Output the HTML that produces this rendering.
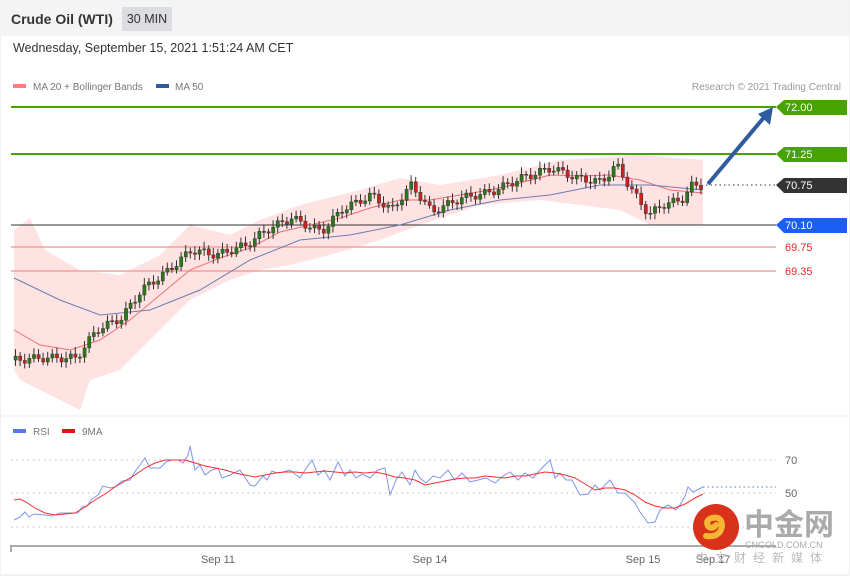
<!DOCTYPE html>
<html><head><meta charset="utf-8"><style>
body{margin:0;background:#f2f2f2;width:850px;height:576px;overflow:hidden;font-family:"Liberation Sans",sans-serif}
.card{position:absolute;left:1px;top:1px;width:848px;height:573px;background:#fff}
.hdr{position:absolute;left:0;top:0;width:848px;height:35px;background:#f4f4f4}
.t{position:absolute;left:10px;top:10px;font-weight:bold;font-size:14px;color:#333}
.tf{position:absolute;left:121px;top:6px;width:50px;height:24px;background:#dcdde0;font-size:12.5px;color:#333;line-height:24px;text-align:center}
.dt{position:absolute;left:12px;top:40px;font-size:12.5px;color:#333}
svg{position:absolute;left:0;top:0}
</style></head><body>
<div class="card">
<div class="hdr"><div class="t">Crude Oil (WTI)</div><div class="tf">30 MIN</div></div>
<div class="dt">Wednesday, September 15, 2021 1:51:24 AM CET</div>
</div>
<svg width="850" height="576" font-family="Liberation Sans, sans-serif">
<rect x="13" y="84" width="13" height="4" fill="#ff7f7f"/><text x="33" y="90" font-size="10" fill="#777">MA 20 + Bollinger Bands</text>
<rect x="156" y="84" width="13" height="4" fill="#2f5c9c"/><text x="175" y="90" font-size="10" fill="#777">MA 50</text>
<text x="841" y="90" font-size="10" fill="#999" text-anchor="end">Research © 2021 Trading Central</text>
<polygon fill="#ffe3e3" points="14,230 30,218 45,250 80,270 120,275 160,255 190,225 230,235 260,220 300,205 360,190 400,178 440,185 500,175 560,160 640,155 703,160 703,225 650,225 620,210 580,205 540,200 480,205 420,225 380,240 330,255 290,265 260,270 230,280 190,300 150,340 120,370 90,380 80,410 50,395 20,380 14,370"/>
<line x1="11" y1="107" x2="776" y2="107" stroke="#48a200" stroke-width="2"/>
<line x1="11" y1="154" x2="776" y2="154" stroke="#48a200" stroke-width="2"/>
<line x1="11" y1="225" x2="776" y2="225" stroke="#333" stroke-width="1"/>
<line x1="11" y1="247" x2="776" y2="247" stroke="#f4a0a0" stroke-width="1.5"/>
<line x1="11" y1="271" x2="776" y2="271" stroke="#f4a0a0" stroke-width="1.5"/>
<line x1="706" y1="185" x2="776" y2="185" stroke="#333" stroke-dasharray="1.5,3"/>
<polyline fill="none" stroke="#f07070" stroke-width="1" points="14,330 40,345 70,350 100,340 130,320 160,295 190,270 220,258 250,248 280,232 310,225 340,218 370,208 400,200 430,200 460,195 490,190 520,183 550,175 580,176 610,175 640,180 670,190 703,193"/>
<polyline fill="none" stroke="#6a7fb0" stroke-width="1" points="14,278 60,300 100,315 150,310 200,290 250,260 300,240 350,235 400,225 450,210 500,200 550,195 600,185 650,185 703,190"/>
<g id="c"></g>
<line x1="708" y1="184" x2="766" y2="115" stroke="#2f5c9c" stroke-width="4"/>
<polygon points="773,107 758,114 770,125" fill="#2f5c9c"/>
<g font-size="11" fill="#fff">
<polygon points="776,107 784,100 847,100 847,115 784,115" fill="#48a200"/><text x="785" y="111">72.00</text>
<polygon points="776,154 784,147 847,147 847,162 784,162" fill="#48a200"/><text x="785" y="158">71.25</text>
<polygon points="776,185 784,178 847,178 847,193 784,193" fill="#333"/><text x="785" y="189">70.75</text>
<polygon points="776,225 784,218 847,218 847,233 784,233" fill="#1a5ef5"/><text x="785" y="229">70.10</text>
<text x="785" y="251" fill="#e8262a">69.75</text><text x="785" y="275" fill="#e8262a">69.35</text>
</g>
<line x1="1" y1="416" x2="849" y2="416" stroke="#eee"/>
<rect x="13" y="429" width="13" height="4" fill="#5a78e0"/><text x="33" y="435" font-size="10" fill="#777">RSI</text>
<rect x="62" y="429" width="13" height="4" fill="#e81010"/><text x="82" y="435" font-size="10" fill="#777">9MA</text>
<g stroke="#bbb" stroke-dasharray="1.5,4"><line x1="11" y1="460" x2="776" y2="460"/><line x1="11" y1="493" x2="776" y2="493"/><line x1="11" y1="527" x2="776" y2="527"/></g>
<line x1="703" y1="487" x2="776" y2="487" stroke="#5a78e0" stroke-dasharray="1.5,3"/>
<g font-size="11" fill="#666"><text x="785" y="464">70</text><text x="785" y="497">50</text></g>
<polyline fill="none" stroke="#7f95ea" stroke-width="1" points="14,520 20,517 25,512 29,517 34,514 45,515 52,516 60,513 72,513 78,513 82,507 87,506 92,499 98,495 103,486 110,488 115,487 122,481 130,480 136,470 140,465 145,458 150,468 160,468 166,462 172,460 178,460 183,463 188,455 190,446 195,470 200,465 205,475 212,470 218,468 222,478 230,475 240,470 250,485 255,486 263,476 267,480 272,471 277,473 283,472 290,470 300,478 305,470 312,460 318,475 324,470 330,480 338,462 345,476 350,470 356,478 362,474 370,478 378,470 385,468 390,495 396,480 402,472 410,485 415,470 420,478 426,483 433,476 440,478 448,470 455,480 462,473 470,482 478,480 486,478 495,483 503,476 510,472 518,480 525,473 533,478 540,470 548,462 550,460 555,478 560,473 566,480 572,480 580,495 588,494 595,485 600,490 610,480 618,493 625,493 635,503 640,512 648,523 655,522 660,510 668,505 676,510 680,505 685,496 688,487 693,492 703,487"/>
<polyline fill="none" stroke="#f03030" stroke-width="1" points="14,500 20,499 26,502 35,508 45,513 55,515 65,514 75,513 85,507 95,500 105,494 115,487 125,481 135,475 145,468 155,463 165,460 175,460 185,460 195,463 205,466 215,468 225,470 235,473 245,475 255,477 265,475 275,473 285,472 295,472 305,473 315,472 325,471 335,472 345,473 355,472 365,473 375,472 385,474 395,477 405,478 415,480 425,485 435,483 445,481 455,479 465,478 475,478 485,476 495,477 505,478 515,476 525,476 535,474 545,472 555,473 565,475 575,478 585,484 595,490 605,488 615,488 625,490 635,495 645,502 655,506 665,508 675,508 685,504 695,498 703,494"/>
<line x1="11" y1="546" x2="776" y2="546" stroke="#aaa" stroke-width="2"/><line x1="11" y1="545" x2="11" y2="552" stroke="#aaa" stroke-width="2"/>
<g font-size="11" fill="#666" text-anchor="middle"><text x="218" y="563">Sep 11</text><text x="430" y="563">Sep 14</text><text x="643" y="563">Sep 15</text><text x="713" y="563">Sep 17</text></g>
<circle cx="716" cy="527" r="23" fill="#d8321a"/>
<path d="M706 536 q14 2 16 -10 q0 -10 -10 -8 q-7 2 -4 8 q4 4 8 -1" fill="none" stroke="#f7b733" stroke-width="6" stroke-linecap="round"/>
<text x="744" y="535" font-size="30" font-weight="bold" fill="#aaa" font-family="Noto Sans CJK SC, sans-serif">中金网</text>
<text x="745" y="548" font-size="9" fill="#aaa">CNGOLD.COM.CN</text>
<text x="696" y="562" font-size="12" fill="#bbb" letter-spacing="7" font-family="Noto Sans CJK SC, sans-serif">中文财经新媒体</text>
</svg>
<script>
var k=[[14,360],[40,358],[75,358],[95,330],[120,318],[140,290],[165,272],[190,250],[215,255],[245,245],[265,230],[290,218],[320,232],[340,210],[370,195],[390,210],[410,185],[430,212],[460,198],[490,192],[520,178],[550,168],[575,178],[600,182],[615,165],[630,190],[648,215],[660,205],[680,200],[690,186],[703,185]];
function f(x){for(var i=0;i<k.length-1;i++)if(x<=k[i+1][0]){var a=k[i],b=k[i+1];return a[1]+(b[1]-a[1])*(x-a[0])/(b[0]-a[0]);}return 185;}
var s='',p=f(14);
for(var x=14;x<=700;x+=4.6){var c=f(x)+Math.sin(x*1.7)*4,o=p,t=Math.min(o,c)-3-Math.abs(Math.sin(x))*4,b=Math.max(o,c)+3+Math.abs(Math.cos(x*2))*3,col=c<o?'#2b7a18':'#d02020';
s+='<line x1="'+(x+1.5)+'" y1="'+t+'" x2="'+(x+1.5)+'" y2="'+b+'" stroke="#333" stroke-width="1"/><rect x="'+x+'" y="'+Math.min(o,c)+'" width="3.2" height="'+Math.max(1,Math.abs(c-o))+'" fill="'+col+'" stroke="#333" stroke-width=".5"/>';p=c;}
document.getElementById('c').innerHTML=s;
</script>
</body></html>
